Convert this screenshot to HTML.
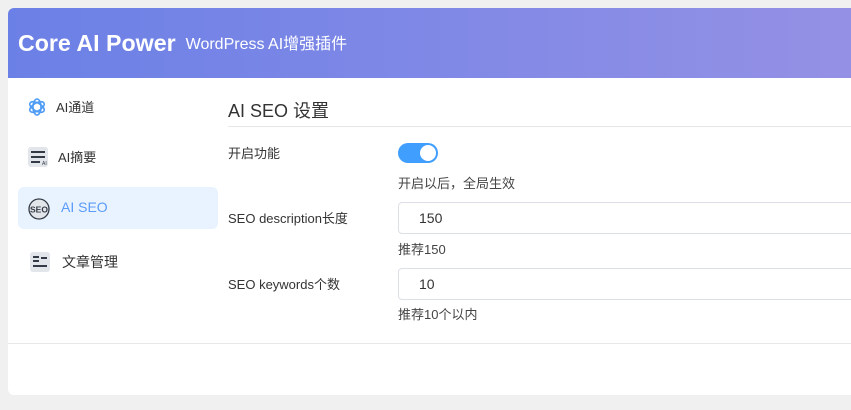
<!DOCTYPE html>
<html><head><meta charset="utf-8"><style>
*{margin:0;padding:0;box-sizing:border-box}
body{width:851px;height:410px;background:#f0f0f0;font-family:"Liberation Sans","Noto Sans CJK SC",sans-serif;color:#333;overflow:hidden;position:relative}
.card{position:absolute;left:8px;top:8px;width:860px;height:387px;background:#fff;border-radius:6px 0 0 6px;overflow:hidden}
.hd{height:70px;background:linear-gradient(90deg,#6b80e6,#9591e5);display:flex;align-items:center;padding-left:10px;color:#fff}
.hd b{font-size:23.2px;font-weight:bold}
.hd span{font-size:16px;margin-left:10px;margin-top:-2px}
.abs{position:absolute;white-space:nowrap}
.nav{font-size:13px;color:#333}
.ico{position:absolute;width:20px;height:20px;border-radius:3px;background:#e2e5ea}
.lbl{font-size:13px;color:#333}
.help{font-size:13px;color:#444}
.inp{position:absolute;left:390px;width:470px;height:32px;border:1px solid #dcdfe6;border-radius:4px;font-size:14px;padding-left:20px;line-height:30px;color:#333}
</style></head><body>
<div class="card">
<div class="hd"><b>Core AI Power</b><span>WordPress AI增强插件</span></div>

<svg class="abs" style="left:19px;top:89px" width="20" height="20" viewBox="0 0 20 20" fill="none" stroke="#4f9cf5" stroke-width="1.6">
<ellipse cx="10" cy="10" rx="8" ry="4" transform="rotate(30 10 10)"/>
<ellipse cx="10" cy="10" rx="8" ry="4" transform="rotate(90 10 10)"/>
<ellipse cx="10" cy="10" rx="8" ry="4" transform="rotate(150 10 10)"/>
</svg>
<div class="abs nav" style="left:48px;top:89px">AI通道</div>

<div class="ico" style="left:20px;top:139px"></div>
<svg class="abs" style="left:20px;top:139px" width="20" height="20"><g stroke="#333a45" stroke-width="2"><line x1="3" y1="5" x2="17" y2="5"/><line x1="3" y1="10" x2="17" y2="10"/><line x1="3" y1="15" x2="12" y2="15"/></g><text x="14" y="18" font-size="5" fill="#333a45" font-family="Liberation Sans">AI</text></svg>
<div class="abs nav" style="left:50px;top:139px">AI摘要</div>

<div class="abs" style="left:10px;top:179px;width:200px;height:42px;background:#e9f3ff;border-radius:6px"></div>
<svg class="abs" style="left:20px;top:190px" width="22" height="22"><circle cx="11" cy="11" r="10" fill="#e2e5ea" stroke="#333a45" stroke-width="1.3"/><text x="11" y="14.5" text-anchor="middle" font-size="8.5" font-weight="bold" fill="#333a45" font-family="Liberation Sans">SEO</text></svg>
<div class="abs nav" style="left:53px;top:191px;color:#5b9cf8;font-size:14px">AI SEO</div>

<div class="ico" style="left:22px;top:244px"></div>
<svg class="abs" style="left:22px;top:244px" width="20" height="20"><g stroke="#333a45" stroke-width="2"><line x1="3" y1="5" x2="9" y2="5"/><line x1="3" y1="9" x2="9" y2="9"/><line x1="11" y1="6" x2="17" y2="6"/><line x1="3" y1="14" x2="17" y2="14"/></g></svg>
<div class="abs nav" style="left:54px;top:244px;font-size:14px">文章管理</div>

<div class="abs" style="left:220px;top:89px;font-size:18px;color:#333">AI SEO 设置</div>
<div class="abs" style="left:220px;top:118px;width:640px;height:1px;background:#e6e6e6"></div>

<div class="abs lbl" style="left:220px;top:135px">开启功能</div>
<div class="abs" style="left:390px;top:135px;width:40px;height:20px;border-radius:10px;background:#409eff"></div>
<div class="abs" style="left:412px;top:137px;width:16px;height:16px;border-radius:50%;background:#fff"></div>
<div class="abs help" style="left:390px;top:165px">开启以后，全局生效</div>

<div class="abs lbl" style="left:220px;top:200px">SEO description长度</div>
<div class="inp" style="top:194px">150</div>
<div class="abs help" style="left:390px;top:231px">推荐150</div>

<div class="abs lbl" style="left:220px;top:266px">SEO keywords个数</div>
<div class="inp" style="top:260px">10</div>
<div class="abs help" style="left:390px;top:296px">推荐10个以内</div>

<div class="abs" style="left:0;top:335px;width:860px;height:1px;background:#e8e8e8"></div>
</div>
</body></html>
